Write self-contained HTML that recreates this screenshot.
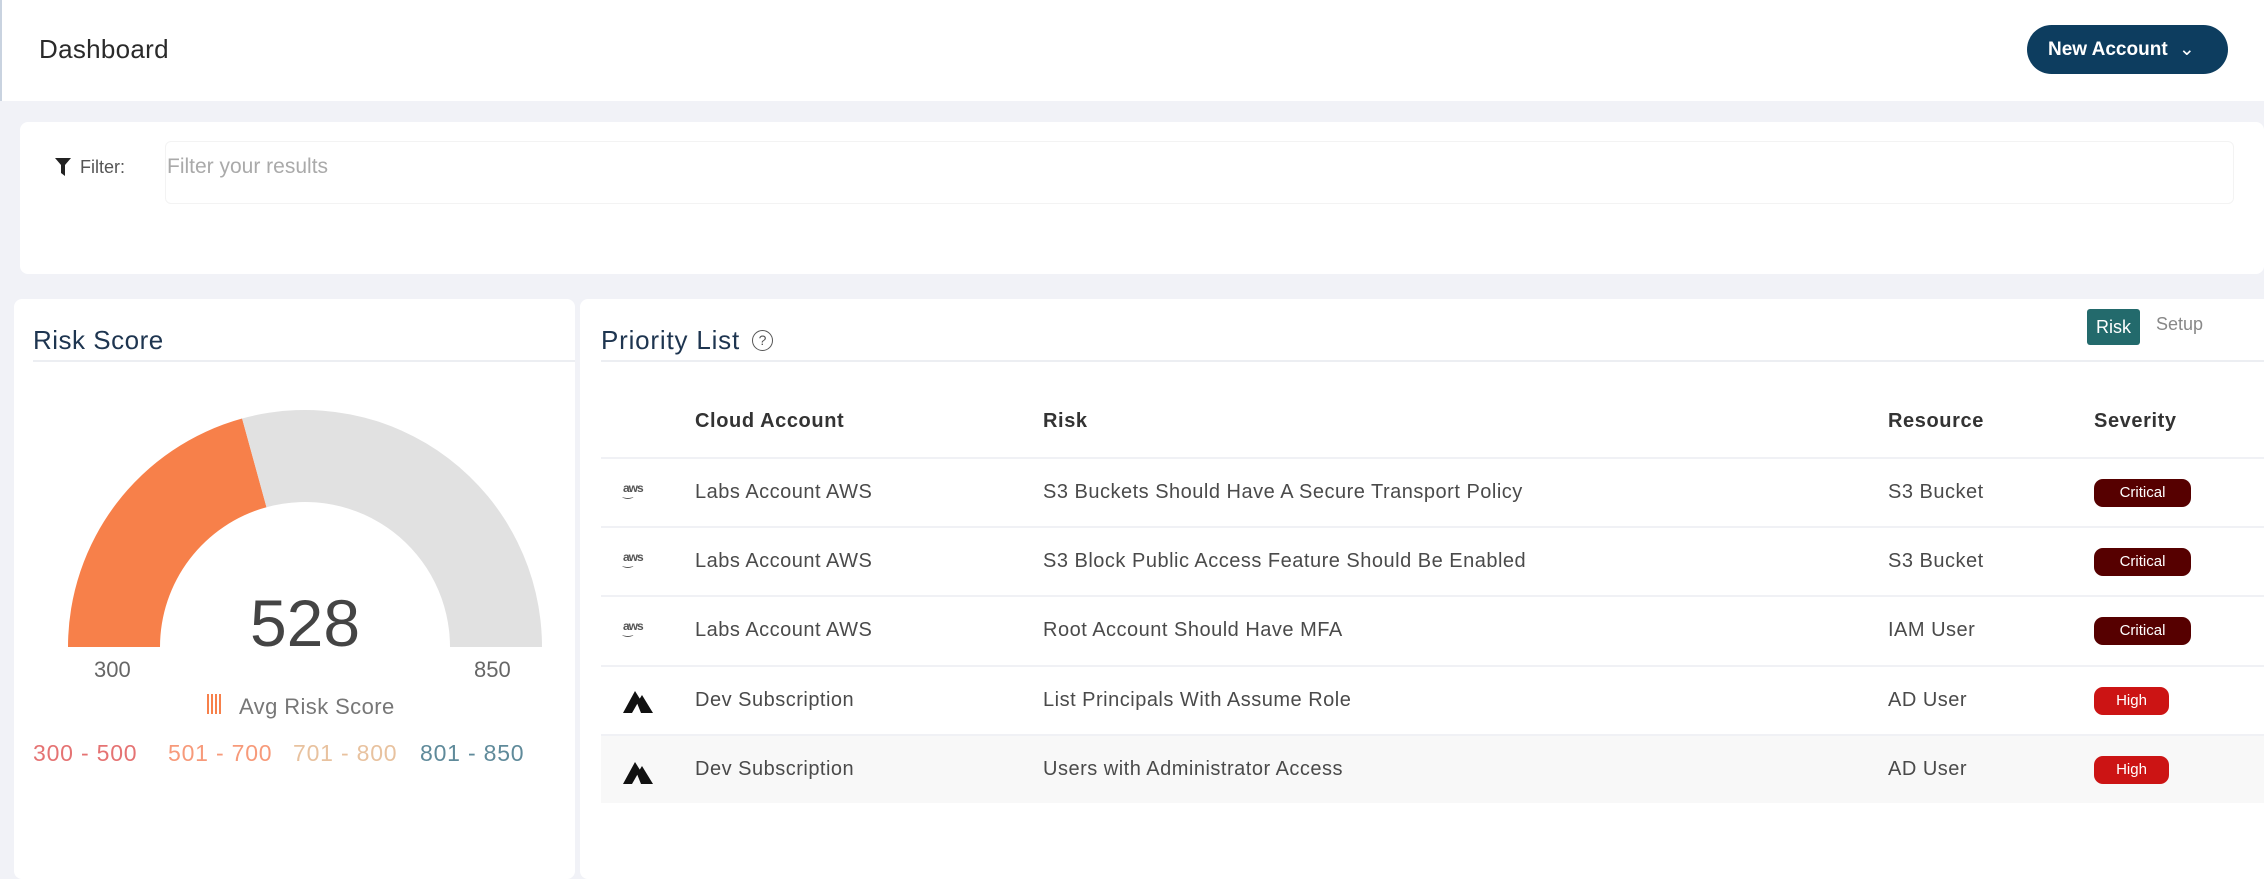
<!DOCTYPE html>
<html><head><meta charset="utf-8"><style>
*{margin:0;padding:0;box-sizing:border-box}
body{width:2264px;height:872px;background:#f1f2f7;font-family:"Liberation Sans",sans-serif;position:relative;overflow:hidden;color:#444}
.abs{position:absolute}
.hdr{left:0;top:0;width:2264px;height:101px;background:#fff;border-left:2px solid #c9d3e0}
.btn{left:2027px;top:25px;width:201px;height:49px;background:#0d3d5f;border-radius:25px;color:#fff;font-size:19px;font-weight:bold;line-height:49px;padding-left:21px}
.card{background:#fff;border-radius:8px}
.row{left:601px;width:1663px;height:69px;border-top:2px solid #f0f1f5}
.t{position:absolute;font-size:20px;color:#4a4a4a;top:22px;letter-spacing:.5px}
.badge{position:absolute;left:1493px;top:20px;height:28px;border-radius:9px;color:#fff;font-size:15px;line-height:28px;text-align:center}
.crit{background:#560000;width:97px}
.high{background:#cc1414;width:75px}
.aws{position:absolute;left:22px;top:22px;font-size:12px;font-weight:bold;color:#555;letter-spacing:-1px}
.th{position:absolute;top:410px;font-size:20px;font-weight:bold;color:#333;letter-spacing:.6px}
.lg{position:absolute;top:740px;font-size:23px;letter-spacing:.8px}
</style></head><body>
<div class="abs hdr"></div>
<div class="abs" style="left:39px;top:34px;font-size:26px;color:#2a2a2a;letter-spacing:.3px">Dashboard</div>
<div class="abs btn">New Account <span style="font-weight:normal;margin-left:6px">&#8964;</span></div>

<div class="abs card" style="left:20px;top:122px;width:2244px;height:152px"></div>
<svg class="abs" style="left:54px;top:157px" width="18" height="20" viewBox="0 0 18 20"><path d="M1 1H17L11 8V19L7 16V8Z" fill="#222"/></svg>
<div class="abs" style="left:80px;top:157px;font-size:18px;color:#555">Filter:</div>
<div class="abs" style="left:165px;top:141px;width:2069px;height:63px;border:1px solid #f3f3f3;border-radius:6px"></div>
<div class="abs" style="left:167px;top:155px;font-size:21px;color:#aaa">Filter your results</div>

<div class="abs card" style="left:14px;top:299px;width:561px;height:580px"></div>
<div class="abs" style="left:33px;top:325px;font-size:26px;color:#1e3550;letter-spacing:.5px">Risk Score</div>
<div class="abs" style="left:33px;top:360px;width:542px;height:2px;background:#eceef2"></div>
<svg class="abs" style="left:0;top:0" width="600" height="872">
<path d="M68 647 A237 237 0 0 1 242.1 418.5 L266.5 507.2 A145 145 0 0 0 160 647 Z" fill="#f7804a"/>
<path d="M242.1 418.5 A237 237 0 0 1 542 647 L450 647 A145 145 0 0 0 266.5 507.2 Z" fill="#e1e1e1"/>
</svg>
<div class="abs" style="left:205px;top:585px;width:200px;text-align:center;font-size:66px;color:#444">528</div>
<div class="abs" style="left:94px;top:657px;font-size:22px;color:#666">300</div>
<div class="abs" style="left:474px;top:657px;font-size:22px;color:#666">850</div>
<div class="abs" style="left:207px;top:694px;width:16px;height:20px;background:repeating-linear-gradient(90deg,#f7804a 0 2px,transparent 2px 4px)"></div>
<div class="abs" style="left:239px;top:694px;font-size:22px;color:#777;letter-spacing:.4px">Avg Risk Score</div>
<div class="lg" style="left:33px;color:#e57373">300 - 500</div>
<div class="lg" style="left:168px;color:#f79a7a">501 - 700</div>
<div class="lg" style="left:293px;color:#e8c29f">701 - 800</div>
<div class="lg" style="left:420px;color:#5f8a9a">801 - 850</div>

<div class="abs card" style="left:580px;top:299px;width:1700px;height:580px"></div>
<div class="abs" style="left:601px;top:325px;font-size:26px;color:#1e3550;letter-spacing:.8px">Priority List</div>
<div class="abs" style="left:752px;top:330px;width:21px;height:21px;border:1.5px solid #555;border-radius:50%;font-size:14px;text-align:center;line-height:18px;color:#555">?</div>
<div class="abs" style="left:2087px;top:309px;width:53px;height:36px;background:#236a6c;border-radius:3px;color:#fff;font-size:18px;text-align:center;line-height:36px">Risk</div>
<div class="abs" style="left:2156px;top:314px;font-size:18px;color:#888">Setup</div>
<div class="abs" style="left:601px;top:360px;width:1663px;height:2px;background:#eceef2"></div>

<div class="th" style="left:695px">Cloud Account</div>
<div class="th" style="left:1043px">Risk</div>
<div class="th" style="left:1888px">Resource</div>
<div class="th" style="left:2094px">Severity</div>

<div class="abs row" style="top:457px"><span class="aws">aws<br><span style="font-weight:normal;position:relative;top:-10px">&#8255;</span></span><span class="t" style="left:94px">Labs Account AWS</span><span class="t" style="left:442px">S3 Buckets Should Have A Secure Transport Policy</span><span class="t" style="left:1287px">S3 Bucket</span><span class="badge crit">Critical</span></div>
<div class="abs row" style="top:526px"><span class="aws">aws<br><span style="font-weight:normal;position:relative;top:-10px">&#8255;</span></span><span class="t" style="left:94px">Labs Account AWS</span><span class="t" style="left:442px">S3 Block Public Access Feature Should Be Enabled</span><span class="t" style="left:1287px">S3 Bucket</span><span class="badge crit">Critical</span></div>
<div class="abs row" style="top:595px"><span class="aws">aws<br><span style="font-weight:normal;position:relative;top:-10px">&#8255;</span></span><span class="t" style="left:94px">Labs Account AWS</span><span class="t" style="left:442px">Root Account Should Have MFA</span><span class="t" style="left:1287px">IAM User</span><span class="badge crit">Critical</span></div>
<div class="abs row" style="top:665px"><svg style="position:absolute;left:20px;top:22px" width="34" height="26" viewBox="0 0 34 26"><path d="M2 24L14 2L19 10L11 24Z M16 14L21 6L32 24L20 24Z" fill="#111"/></svg><span class="t" style="left:94px">Dev Subscription</span><span class="t" style="left:442px">List Principals With Assume Role</span><span class="t" style="left:1287px">AD User</span><span class="badge high">High</span></div>
<div class="abs row" style="top:734px;background:#f8f8f8"><svg style="position:absolute;left:20px;top:24px" width="34" height="26" viewBox="0 0 34 26"><path d="M2 24L14 2L19 10L11 24Z M16 14L21 6L32 24L20 24Z" fill="#111"/></svg><span class="t" style="left:94px">Dev Subscription</span><span class="t" style="left:442px">Users with Administrator Access</span><span class="t" style="left:1287px">AD User</span><span class="badge high">High</span></div>
</body></html>
